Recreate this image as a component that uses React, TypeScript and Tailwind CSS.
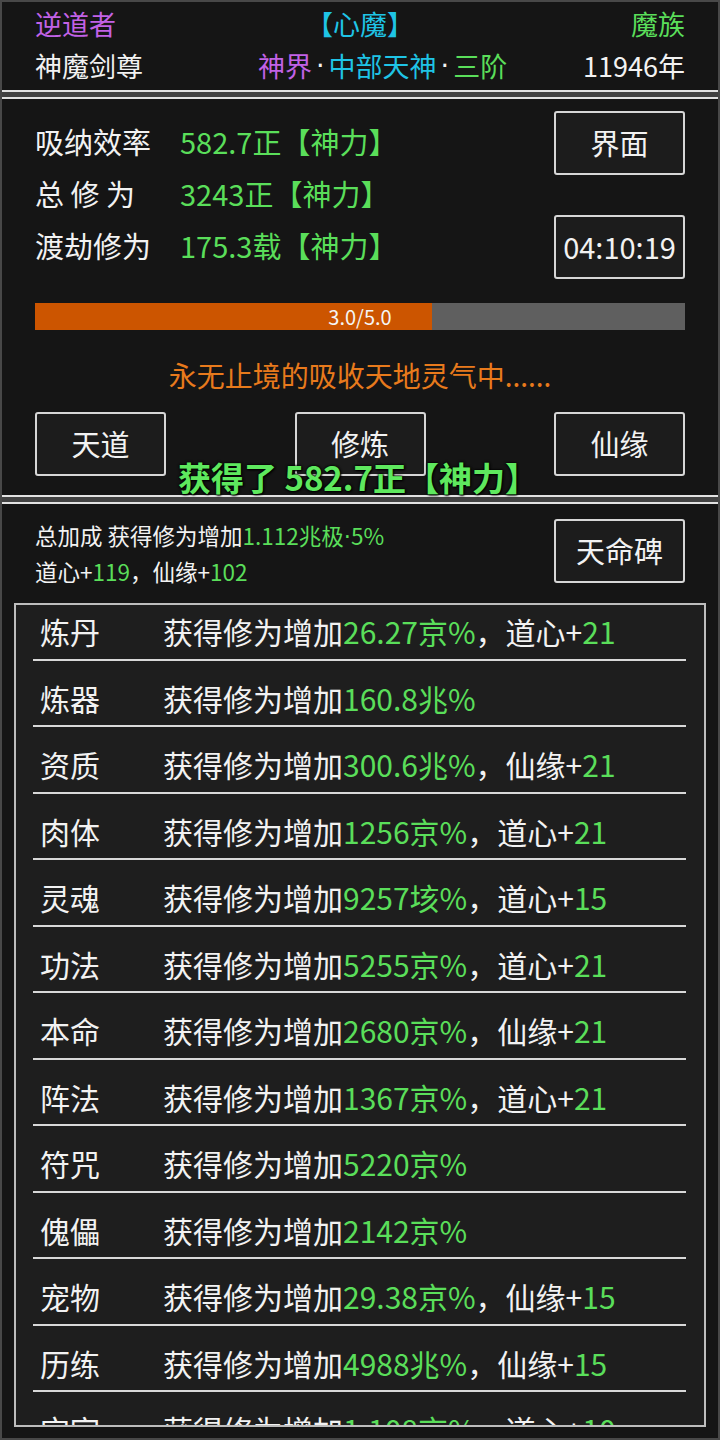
import React from "react";

const G = "text-[#5ade5a]";
const DOT = "font-['DejaVu_Sans']";

/* ── bonus rows ───────────────────────────── */
const rows = [
  { label: "炼丹", value: "26.27京%", extra: "道心", plus: "21" },
  { label: "炼器", value: "160.8兆%" },
  { label: "资质", value: "300.6兆%", extra: "仙缘", plus: "21" },
  { label: "肉体", value: "1256京%", extra: "道心", plus: "21" },
  { label: "灵魂", value: "9257垓%", extra: "道心", plus: "15" },
  { label: "功法", value: "5255京%", extra: "道心", plus: "21" },
  { label: "本命", value: "2680京%", extra: "仙缘", plus: "21" },
  { label: "阵法", value: "1367京%", extra: "道心", plus: "21" },
  { label: "符咒", value: "5220京%" },
  { label: "傀儡", value: "2142京%" },
  { label: "宠物", value: "29.38京%", extra: "仙缘", plus: "15" },
  { label: "历练", value: "4988兆%", extra: "仙缘", plus: "15" },
  { label: "宝宇", value: "1.108京%", extra: "道心", plus: "10" },
];

const Btn = ({ children, className = "" }: { children: React.ReactNode; className?: string }) => (
  <div
    className={`w-[131px] h-[64px] flex items-center justify-center border-2 border-[#d6d6d6] rounded-[3px] bg-[#1c1c1c] text-[#f2f2f2] text-[29px] ${className}`}
  >
    {children}
  </div>
);

const Separator = () => (
  <div className="h-[9px] shrink-0 bg-[#424242] border-y-2 border-[#e2e2e2]" />
);

export default function App() {
  return (
    <div
      className="w-[720px] h-[1440px] overflow-hidden flex flex-col bg-[#151515] border-2 border-[#484848] text-[#f2f2f2]"
      style={{ fontFamily: '"Noto Sans CJK SC", "Noto Sans", sans-serif' }}
    >
      {/* ── Header ─────────────────────── */}
      <div className="h-[88px] shrink-0 px-[33px] pt-[2px]">
        <div className="h-[40px] grid grid-cols-3 items-center leading-[40px] text-[27px]">
          <span className="text-[#c262e6]">逆道者</span>
          <span className="text-center text-[#1fc4e6]">【心魔】</span>
          <span className="text-right text-[#5ade5a]">魔族</span>
        </div>
        <div className="h-[40px] flex items-center leading-[40px] mt-[2px] text-[27px]">
          <span className="w-[223px] shrink-0">神魔剑尊</span>
          <span className="flex items-center">
            <span className="text-[#c262e6]">神界</span>
            <span className={`${DOT} mx-[4px]`}>·</span>
            <span className="text-[#1fc4e6]">中部天神</span>
            <span className={`${DOT} mx-[4px]`}>·</span>
            <span className="text-[#5ade5a]">三阶</span>
          </span>
          <span className="ml-auto">11946年</span>
        </div>
      </div>

      <Separator />

      {/* ── Cultivation panel ──────────── */}
      <div className="relative h-[396px] shrink-0 px-[33px] pt-[12px]">
        <div className="flex justify-between items-start">
          <div className="mt-[5px] text-[29px]">
            {[
              ["吸纳效率", "582.7正【神力】"],
              ["总 修 为", "3243正【神力】"],
              ["渡劫修为", "175.3载【神力】"],
            ].map(([k, v]) => (
              <div key={k} className="h-[52px] flex items-center">
                <span className="w-[145px] whitespace-pre">{k}</span>
                <span className={G}>{v}</span>
              </div>
            ))}
          </div>
          <div className="flex flex-col gap-[40px]">
            <Btn>界面</Btn>
            <Btn>04:10:19</Btn>
          </div>
        </div>

        {/* progress */}
        <div className="relative mt-[24px] h-[27px] bg-[#5f5f5f]">
          <div className="h-full w-[61%] bg-[#cc5500]" />
          <div className="absolute inset-0 flex items-center justify-center text-[20px] text-[#f5f5f5]">
            3.0/5.0
          </div>
        </div>

        <div className="mt-[27px] h-[36px] flex items-center justify-center text-[28px] text-[#e87a1c]">
          永无止境的吸收天地灵气中......
        </div>

        <div className="mt-[19px] flex justify-between">
          <Btn>天道</Btn>
          <Btn>修炼</Btn>
          <Btn>仙缘</Btn>
        </div>

        {/* floating gain text */}
        <div className="absolute left-0 right-[4px] top-[359px] text-center text-[33px] font-bold leading-[38px] text-[#5ee85e] [text-shadow:0_0_2px_#000,0_0_3px_#000,1px_1px_2px_#000]">
          获得了 582.7正【神力】
        </div>
      </div>

      <Separator />

      {/* ── Bonus panel ────────────────── */}
      <div className="flex-1 min-h-0 flex flex-col">
        <div className="px-[33px] flex justify-between items-start">
          <div className="mt-[14px] text-[22.5px] leading-[34px]">
            <div>
              总加成 获得修为增加<span className={G}>1.112兆极<span className={DOT}>·</span>5%</span>
            </div>
            <div>
              道心+<span className={G}>119</span>，仙缘+<span className={G}>102</span>
            </div>
          </div>
          <Btn className="mt-[15px]">天命碑</Btn>
        </div>

        <div className="flex-1 min-h-0 mt-[15px] mx-[12px] mb-[11px] border-2 border-[#bdbdbd] bg-[#1e1e1e] overflow-hidden">
          <div className="-mt-[11px] ml-[17px] mr-[18px]">
            {rows.map((r) => (
              <div key={r.label} className="h-[66.5px] pt-[17px] border-b-2 border-[#d8d8d8]">
                <div className="flex pl-[7px] text-[30px] leading-[40px] whitespace-nowrap">
                  <span className="w-[123px] shrink-0">{r.label}</span>
                  <span>
                    获得修为增加<span className={G}>{r.value}</span>
                    {r.extra && (
                      <>
                        ，{r.extra}+<span className={G}>{r.plus}</span>
                      </>
                    )}
                  </span>
                </div>
              </div>
            ))}
          </div>
        </div>
      </div>
    </div>
  );
}
